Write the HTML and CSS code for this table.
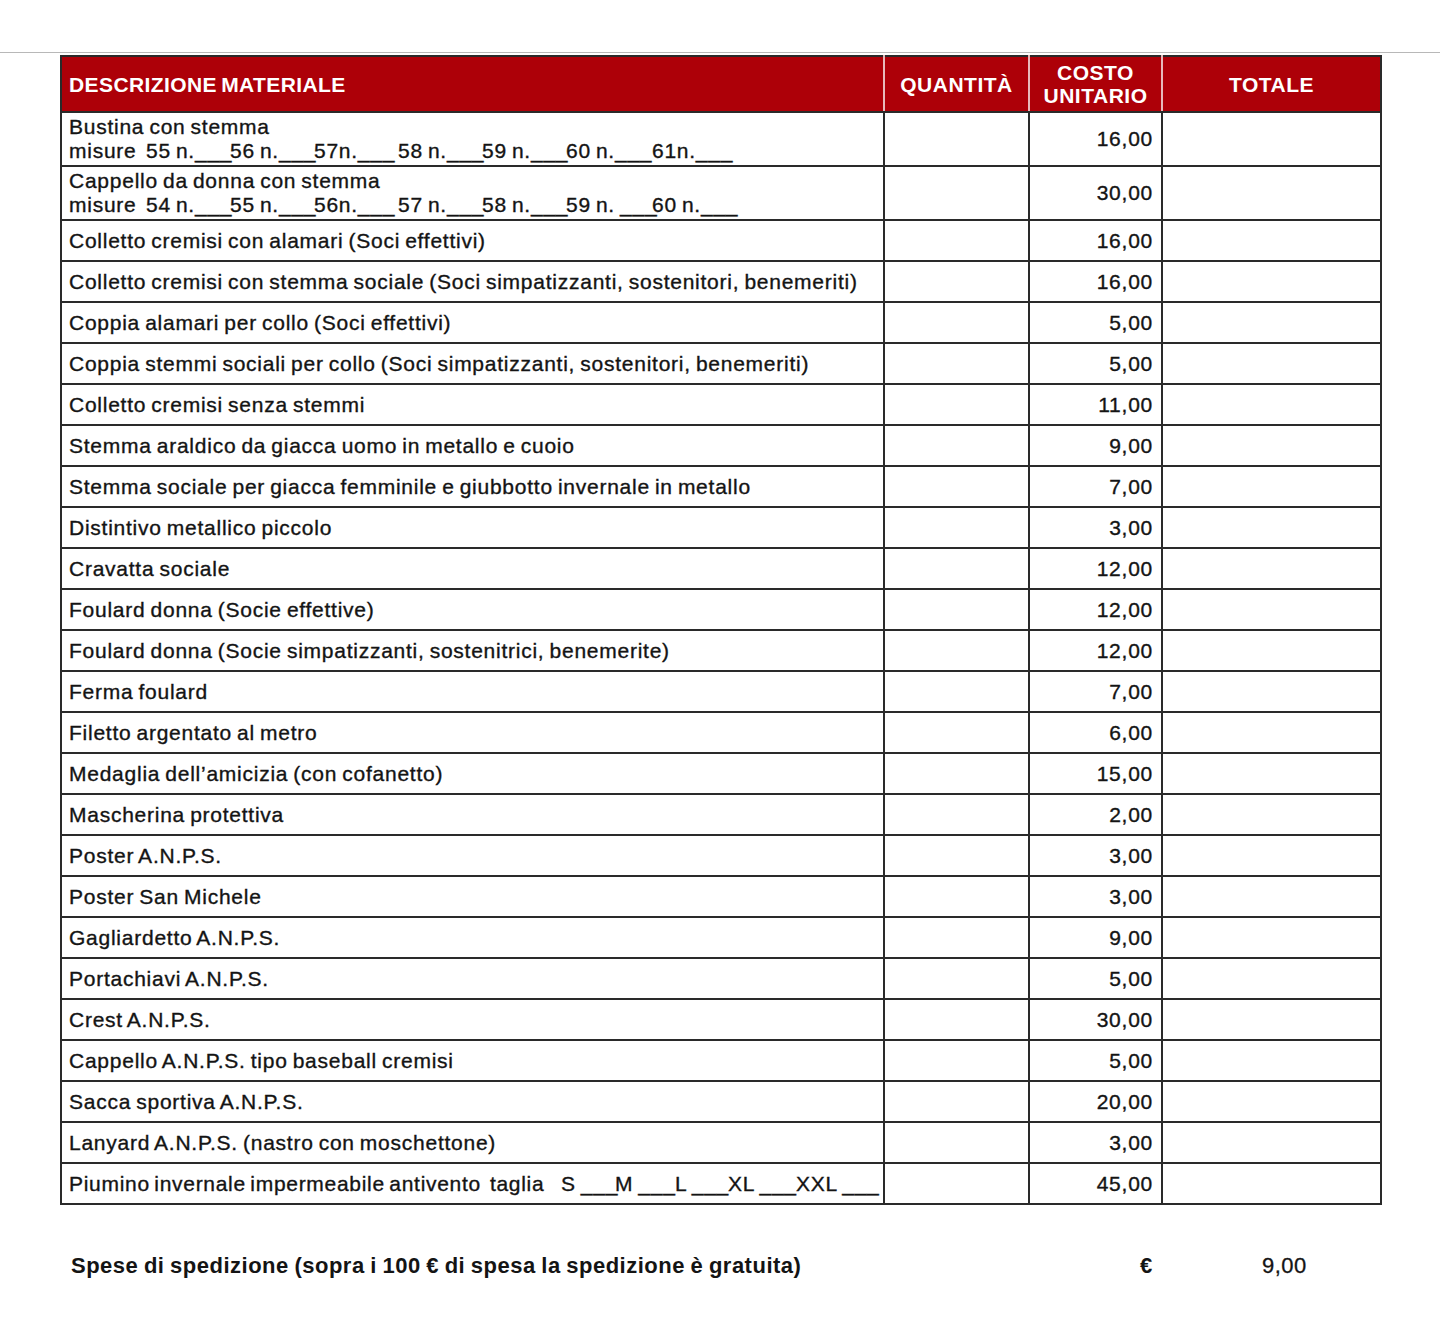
FILE: index.html
```html
<!DOCTYPE html>
<html lang="it">
<head>
<meta charset="utf-8">
<title>Materiale</title>
<link rel="stylesheet" href="styles.css">
</head>
<body>
<div class="rule"></div>
<table class="order">
  <colgroup>
    <col class="c-desc"><col class="c-qty"><col class="c-cost"><col class="c-tot">
  </colgroup>
  <thead>
    <tr>
      <th class="h-desc">DESCRIZIONE MATERIALE</th>
      <th>QUANTITÀ</th>
      <th class="h-cost">COSTO<br>UNITARIO</th>
      <th>TOTALE</th>
    </tr>
  </thead>
  <tbody>
    <tr class="tall"><td class="desc">Bustina con stemma<br><span class="lbl">misure</span><span class="sz">55 n.___</span><span class="sz">56 n.___</span><span class="sz">57n.___</span><span class="sz">58 n.___</span><span class="sz">59 n.___</span><span class="sz sz-w">60 n.___</span><span class="sz">61n.___</span></td><td></td><td class="cost">16,00</td><td></td></tr>
    <tr class="tall"><td class="desc">Cappello da donna con stemma<br><span class="lbl">misure</span><span class="sz">54 n.___</span><span class="sz">55 n.___</span><span class="sz">56n.___</span><span class="sz">57 n.___</span><span class="sz">58 n.___</span><span class="sz sz-w">59 n. ___</span><span class="sz">60 n.___</span></td><td></td><td class="cost">30,00</td><td></td></tr>
    <tr><td class="desc">Colletto cremisi con alamari (Soci effettivi)</td><td></td><td class="cost">16,00</td><td></td></tr>
    <tr><td class="desc">Colletto cremisi con stemma sociale (Soci simpatizzanti, sostenitori, benemeriti)</td><td></td><td class="cost">16,00</td><td></td></tr>
    <tr><td class="desc">Coppia alamari per collo (Soci effettivi)</td><td></td><td class="cost">5,00</td><td></td></tr>
    <tr><td class="desc">Coppia stemmi sociali per collo (Soci simpatizzanti, sostenitori, benemeriti)</td><td></td><td class="cost">5,00</td><td></td></tr>
    <tr><td class="desc">Colletto cremisi senza stemmi</td><td></td><td class="cost">11,00</td><td></td></tr>
    <tr><td class="desc">Stemma araldico da giacca uomo in metallo e cuoio</td><td></td><td class="cost">9,00</td><td></td></tr>
    <tr><td class="desc">Stemma sociale per giacca femminile e giubbotto invernale in metallo</td><td></td><td class="cost">7,00</td><td></td></tr>
    <tr><td class="desc">Distintivo metallico piccolo</td><td></td><td class="cost">3,00</td><td></td></tr>
    <tr><td class="desc">Cravatta sociale</td><td></td><td class="cost">12,00</td><td></td></tr>
    <tr><td class="desc">Foulard donna (Socie effettive)</td><td></td><td class="cost">12,00</td><td></td></tr>
    <tr><td class="desc">Foulard donna (Socie simpatizzanti, sostenitrici, benemerite)</td><td></td><td class="cost">12,00</td><td></td></tr>
    <tr><td class="desc">Ferma foulard</td><td></td><td class="cost">7,00</td><td></td></tr>
    <tr><td class="desc">Filetto argentato al metro</td><td></td><td class="cost">6,00</td><td></td></tr>
    <tr><td class="desc">Medaglia dell’amicizia (con cofanetto)</td><td></td><td class="cost">15,00</td><td></td></tr>
    <tr><td class="desc">Mascherina protettiva</td><td></td><td class="cost">2,00</td><td></td></tr>
    <tr><td class="desc">Poster A.N.P.S.</td><td></td><td class="cost">3,00</td><td></td></tr>
    <tr><td class="desc">Poster San Michele</td><td></td><td class="cost">3,00</td><td></td></tr>
    <tr><td class="desc">Gagliardetto A.N.P.S.</td><td></td><td class="cost">9,00</td><td></td></tr>
    <tr><td class="desc">Portachiavi A.N.P.S.</td><td></td><td class="cost">5,00</td><td></td></tr>
    <tr><td class="desc">Crest A.N.P.S.</td><td></td><td class="cost">30,00</td><td></td></tr>
    <tr><td class="desc">Cappello A.N.P.S. tipo baseball cremisi</td><td></td><td class="cost">5,00</td><td></td></tr>
    <tr><td class="desc">Sacca sportiva A.N.P.S.</td><td></td><td class="cost">20,00</td><td></td></tr>
    <tr><td class="desc">Lanyard A.N.P.S. (nastro con moschettone)</td><td></td><td class="cost">3,00</td><td></td></tr>
    <tr><td class="desc"><span class="pm-lbl">Piumino invernale impermeabile antivento&nbsp; taglia</span><span class="tg tg-s">S ___</span><span class="tg tg-m">M ___</span><span class="tg tg-l">L ___</span><span class="tg tg-xl">XL ___</span><span class="tg">XXL ___</span></td><td></td><td class="cost">45,00</td><td></td></tr>
  </tbody>
</table>
<div class="shipping">
  <span class="ship-label">Spese di spedizione (sopra i 100 € di spesa la spedizione è gratuita)</span>
  <span class="ship-cur">€</span>
  <span class="ship-val">9,00</span>
</div>
</body>
</html>
```

FILE: styles.css
```css
html, body {
  margin: 0;
  padding: 0;
  background: #ffffff;
}

body {
  font-family: "Liberation Sans", Arial, sans-serif;
  color: #141414;
}

.rule {
  margin-top: 52px;
  height: 1px;
  background: #b8b8b8;
}

.order {
  margin: 2px 0 0 60px;
  width: 1320px;
  border-collapse: collapse;
  table-layout: fixed;
  border: 2px solid #2a2a2a;
}

.c-desc { width: 823px; }
.c-qty { width: 145px; }
.c-cost { width: 133px; }
.c-tot { width: 219px; }

.order th {
  background: #ad0008;
  color: #ffffff;
  font-weight: 700;
  font-size: 21px;
  letter-spacing: 0.5px;
  height: 54px;
  padding: 0;
  text-align: center;
  border-left: 2px solid #e7b9bb;
  border-bottom: 2px solid #2a2a2a;
  line-height: 23px;
}

.order th:first-child {
  border-left: none;
}

.order th.h-desc {
  text-align: left;
  padding-left: 7px;
  letter-spacing: 0.4px;
  word-spacing: -2px;
}

.order td {
  border: 2px solid #2a2a2a;
  height: 39px;
  padding: 0;
  font-size: 21px;
  letter-spacing: 0.75px;
  word-spacing: -1.5px;
  line-height: 24px;
  color: #141414;
  -webkit-text-stroke: 0.35px #141414;
}

.order tr.tall td {
  height: 52px;
}

.order td.desc {
  padding-left: 7px;
  white-space: nowrap;
}

.lbl {
  display: inline-block;
  width: 77px;
}

.sz {
  display: inline-block;
  width: 84px;
}

.sz-w {
  width: 86px;
}

.pm-lbl {
  display: inline-block;
  width: 492px;
  letter-spacing: 0.7px;
  word-spacing: -2px;
}

.tg {
  display: inline-block;
}

.tg-s { width: 54px; }
.tg-m { width: 60px; }
.tg-l { width: 53px; }
.tg-xl { width: 68px; }

.order td.cost {
  text-align: right;
  padding-right: 8px;
}

.shipping {
  display: flex;
  align-items: center;
  margin-top: 48px;
  padding-left: 71px;
  font-size: 22px;
  color: #141414;
}

.ship-label {
  font-weight: 700;
  letter-spacing: 0.5px;
  word-spacing: -1px;
  width: 1069px;
}

.ship-cur {
  font-weight: 700;
  width: 122px;
}

.ship-val {
  font-weight: 400;
  letter-spacing: 0.5px;
  -webkit-text-stroke: 0.3px #141414;
}
```
